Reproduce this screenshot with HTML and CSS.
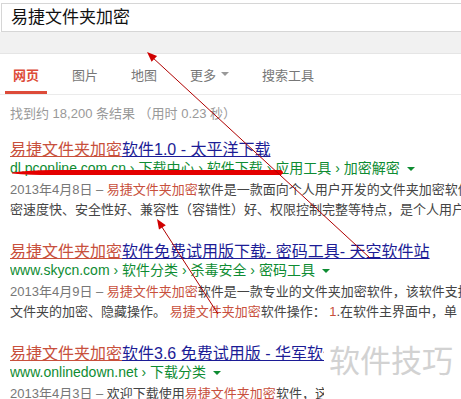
FILE: index.html
```html
<!DOCTYPE html>
<html lang="zh-CN">
<head>
  <meta charset="UTF-8">
  <title>易捷文件夹加密 - 搜索</title>
  <link rel="stylesheet" href="styles.css">
</head>
<body>

  <div class="search-box">易捷文件夹加密</div>
  <div class="band"></div>

  <div class="tabs">
    <span class="tab active">网页</span>
    <span class="tab">图片</span>
    <span class="tab">地图</span>
    <span class="tab">更多<i class="caret"></i></span>
    <span class="tab">搜索工具</span>
  </div>

  <div class="results">
    <div class="stats">找到约 18,200 条结果 （用时 0.23 秒）</div>

    <div class="result">
      <div class="title"><a class="hl">易捷文件夹加密</a><a>软件1.0 - 太平洋下载</a></div>
      <div class="url">dl.pconline.com.cn › 下载中心 › 软件下载 › 应用工具 › 加密解密 <i class="caret green"></i></div>
      <div class="line"><span class="date">2013年4月8日 – </span><em>易捷文件夹加密</em>软件是一款面向个人用户开发的文件夹加密软件</div>
      <div class="line">密速度快、安全性好、兼容性（容错性）好、权限控制完整等特点，是个人用户</div>
    </div>

    <div class="result">
      <div class="title"><a class="hl">易捷文件夹加密</a><a>软件免费试用版下载- 密码工具- 天空软件站</a></div>
      <div class="url">www.skycn.com › 软件分类 › 杀毒安全 › 密码工具 <i class="caret green"></i></div>
      <div class="line"><span class="date">2013年4月9日 – </span><em>易捷文件夹加密</em>软件是一款专业的文件夹加密软件，该软件支持</div>
      <div class="line">文件夹的加密、隐藏操作。 <em>易捷文件夹加密</em>软件操作： <em>1</em>.在软件主界面中，单</div>
    </div>

    <div class="result short">
      <div class="title"><a class="hl">易捷文件夹加密</a><a>软件3.6 免费试用版 - 华军软件园</a></div>
      <div class="url">www.onlinedown.net › 下载分类 <i class="caret green"></i></div>
      <div class="line"><span class="date">2013年4月3日 – </span>欢迎下载使用<em>易捷文件夹加密</em>软件，这款软件</div>
    </div>
  </div>

  <div class="watermark">软件技巧</div>

  <svg class="marks" width="461" height="399" viewBox="0 0 461 399">
    <path d="M12 172.5 Q30 170 52 170 L281 170 Q285 172.5 281 175 L52 175 Q30 175 12 173.5 Z" fill="#e40000"/>
    <line x1="370" y1="258" x2="152" y2="57" stroke="#b00000" stroke-width="1"/>
    <polygon points="147,52 157.1,55.9 151.6,61.7" fill="#d00000"/>
    <line x1="218" y1="314" x2="160" y2="224" stroke="#b00000" stroke-width="1"/>
    <polygon points="157,219 165.8,225.2 159,229.6" fill="#d00000"/>
  </svg>

</body>
</html>
```

FILE: styles.css
```css
body {
  margin: 0;
  width: 461px;
  height: 399px;
  overflow: hidden;
  position: relative;
  background: #fff;
  font-family: "Liberation Sans", "Noto Sans CJK SC", sans-serif;
  color: #222;
}

.search-box {
  margin: 3px 0 0 1px;
  height: 27px;
  line-height: 27px;
  padding-left: 9px;
  border: 1px solid #d6d6d6;
  border-right: none;
  font-size: 17px;
  color: #111;
  background: #fff;
}

.band {
  height: 21px;
  background: #f1f1f1;
  border-bottom: 1px solid #e5e5e5;
}

.tabs {
  display: flex;
  align-items: center;
  gap: 33px;
  height: 40px;
  padding-left: 13px;
  border-bottom: 1px solid #ebebeb;
  font-size: 13px;
  color: #777;
}

.tab {
  position: relative;
  display: flex;
  align-items: center;
  height: 40px;
}

.tab.active {
  color: #dd4b39;
  font-weight: bold;
}

.tab.active::after {
  content: "";
  position: absolute;
  left: -8px;
  right: -8px;
  bottom: 0;
  height: 3px;
  background: #dd4b39;
}

.caret {
  display: inline-block;
  width: 0;
  height: 0;
  margin-left: 5px;
  border-left: 4px solid transparent;
  border-right: 4px solid transparent;
  border-top: 4px solid #999;
}

.caret.green {
  margin-left: 3px;
  border-top-color: #0e8c32;
  vertical-align: middle;
}

.results {
  padding-left: 10px;
  width: 451px;
  overflow: hidden;
}

.stats {
  margin-top: 9px;
  height: 20px;
  line-height: 20px;
  font-size: 13px;
  color: #999;
}

.result {
  margin-top: 16px;
  white-space: nowrap;
  overflow: hidden;
}

.result + .result {
  margin-top: 22px;
}

.result.short {
  width: 314px;
}

.title {
  height: 20px;
  line-height: 20px;
  font-size: 16px;
}

.title a {
  color: #1c1c96;
  text-decoration: underline;
}

.title a.hl {
  color: #c8503c;
}

.url {
  height: 17px;
  line-height: 17px;
  font-size: 14px;
  color: #0e8c32;
  margin-bottom: 3px;
}

.line {
  height: 20px;
  line-height: 20px;
  font-size: 13px;
  color: #444;
}

.line .date {
  color: #777;
}

.line em {
  font-style: normal;
  color: #c8503c;
}

.watermark {
  position: absolute;
  left: 329px;
  top: 344px;
  font-size: 31px;
  line-height: 36px;
  color: #d2d2d2;
}

.marks {
  position: absolute;
  left: 0;
  top: 0;
  pointer-events: none;
}
```
